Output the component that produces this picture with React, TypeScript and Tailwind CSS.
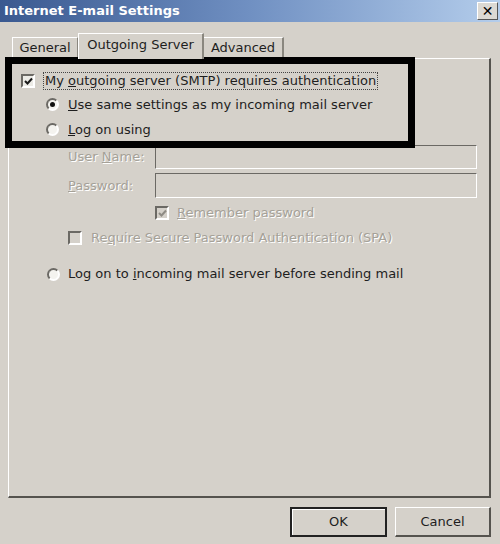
import React from "react";

const Check = ({ color = "#1a1a1a" }: { color?: string }) => (
  <svg width="9" height="9" viewBox="0 0 9 9">
    <path d="M1 4 L3.5 6.5 L8 1.5" fill="none" stroke={color} strokeWidth="2" />
  </svg>
);

const Box = ({ checked, disabled }: { checked?: boolean; disabled?: boolean }) => (
  <span
    className={
      "w-[14px] h-[14px] shrink-0 flex items-center justify-center border-[2px] border-t-[#6b6964] border-l-[#6b6964] border-b-white border-r-white " +
      (disabled ? "bg-[#d5d1ca]" : "bg-[#ecebe6]")
    }
  >
    {checked && <Check color={disabled ? "#8e8b84" : "#1a1a1a"} />}
  </span>
);

const Radio = ({ on }: { on?: boolean }) => (
  <span className="w-[13px] h-[13px] shrink-0 rounded-full border-[2px] border-t-[#6b6964] border-l-[#6b6964] border-b-white border-r-white bg-[#f4f3ef] flex items-center justify-center">
    {on && <span className="w-[5px] h-[5px] rounded-full bg-[#111]" />}
  </span>
);

const dim = "text-[#a5a198] [text-shadow:1px_1px_0_#fff]";

export default function App() {
  return (
    <div className="w-[500px] h-[544px] bg-[#d5d1ca] flex flex-col relative overflow-hidden font-['DejaVu_Sans',sans-serif] text-[13px] text-[#1e1e1e]">
      {/* title bar */}
      <div className="h-[22px] shrink-0 bg-gradient-to-r from-[#3a5990] via-[#7090c2] to-[#b4cdeb] flex items-center justify-between pl-[4px] pr-[2px]">
        <span className="text-white font-bold text-[13px]">Internet E-mail Settings</span>
        <span className="w-[21px] h-[18px] bg-[#dcd9d3] border border-t-white border-l-white border-b-[#555] border-r-[#555] flex items-center justify-center font-bold text-[14px] text-black leading-none">
          ✕
        </span>
      </div>

      {/* tabs */}
      <div className="h-[36px] shrink-0 flex items-end pl-[12px]">
        <div className="w-[66px] h-[21px] border-t border-l border-white border-r border-r-[#8a877f] flex items-center justify-center">
          General
        </div>
        <div className="w-[126px] h-[26px] -mb-[1px] bg-[#d5d1ca] border-t border-l border-white border-r-2 border-r-[#8a877f] flex items-center justify-center pb-[3px] relative z-10">
          Outgoing Server
        </div>
        <div className="w-[80px] h-[21px] border-t border-white border-r-2 border-r-[#8a877f] flex items-center justify-center">
          Advanced
        </div>
      </div>

      {/* panel */}
      <div className="ml-[8px] w-[483px] h-[440px] shrink-0 border-t border-l border-white border-r-2 border-b-2 border-r-[#55534e] border-b-[#55534e] pl-[12px] pt-[13px] flex flex-col">
        <div className="h-[18px] flex items-center gap-[8px]">
          <Box checked />
          <span className="border border-dotted border-[#444] px-[1px] leading-[16px]">
            My <u>o</u>utgoing server (SMTP) requires authentication
          </span>
        </div>
        <div className="mt-[7px] pl-[25px] h-[15px] flex items-center gap-[9px]">
          <Radio on />
          <span>
            <u>U</u>se same settings as my incoming mail server
          </span>
        </div>
        <div className="mt-[10px] pl-[25px] h-[15px] flex items-center gap-[9px]">
          <Radio />
          <span>
            <u>L</u>og on using
          </span>
        </div>

        <div className="mt-[8px] pl-[47px] flex items-center h-[24px]">
          <span className={"w-[87px] " + dim}>
            User <u>N</u>ame:
          </span>
          <span className="w-[322px] h-[24px] border border-t-[#6b6964] border-l-[#6b6964] border-b-white border-r-white bg-[#d5d1ca]" />
        </div>
        <div className="mt-[4px] pl-[47px] flex items-center h-[25px]">
          <span className={"w-[87px] " + dim}>
            <u>P</u>assword:
          </span>
          <span className="w-[322px] h-[25px] border border-t-[#6b6964] border-l-[#6b6964] border-b-white border-r-white bg-[#d5d1ca]" />
        </div>
        <div className="mt-[8px] pl-[134px] h-[14px] flex items-center gap-[8px]">
          <Box checked disabled />
          <span className={dim}>
            <u>R</u>emember password
          </span>
        </div>
        <div className="mt-[11px] pl-[47px] h-[14px] flex items-center gap-[9px]">
          <Box disabled />
          <span className={dim}>
            Re<u>q</u>uire Secure Password Authentication (SPA)
          </span>
        </div>
        <div className="mt-[22px] pl-[26px] h-[14px] flex items-center gap-[8px]">
          <Radio />
          <span>
            Log on to <u>i</u>ncoming mail server before sending mail
          </span>
        </div>
      </div>

      {/* buttons */}
      <div className="mt-[9px] flex justify-end pr-[9px] gap-[8px]">
        <button className="w-[97px] h-[30px] border-2 border-[#222] bg-[#d5d1ca] shadow-[inset_1px_1px_0_#fff]">
          OK
        </button>
        <button className="w-[96px] h-[30px] border border-t-white border-l-white border-b-[#55534e] border-r-[#55534e] border-b-2 border-r-2 bg-[#d5d1ca]">
          Cancel
        </button>
      </div>

      {/* black highlight frame drawn over the dialog */}
      <div className="absolute left-[5px] top-[57px] w-[410px] h-[91px] border-[7px] border-black pointer-events-none" />
    </div>
  );
}
